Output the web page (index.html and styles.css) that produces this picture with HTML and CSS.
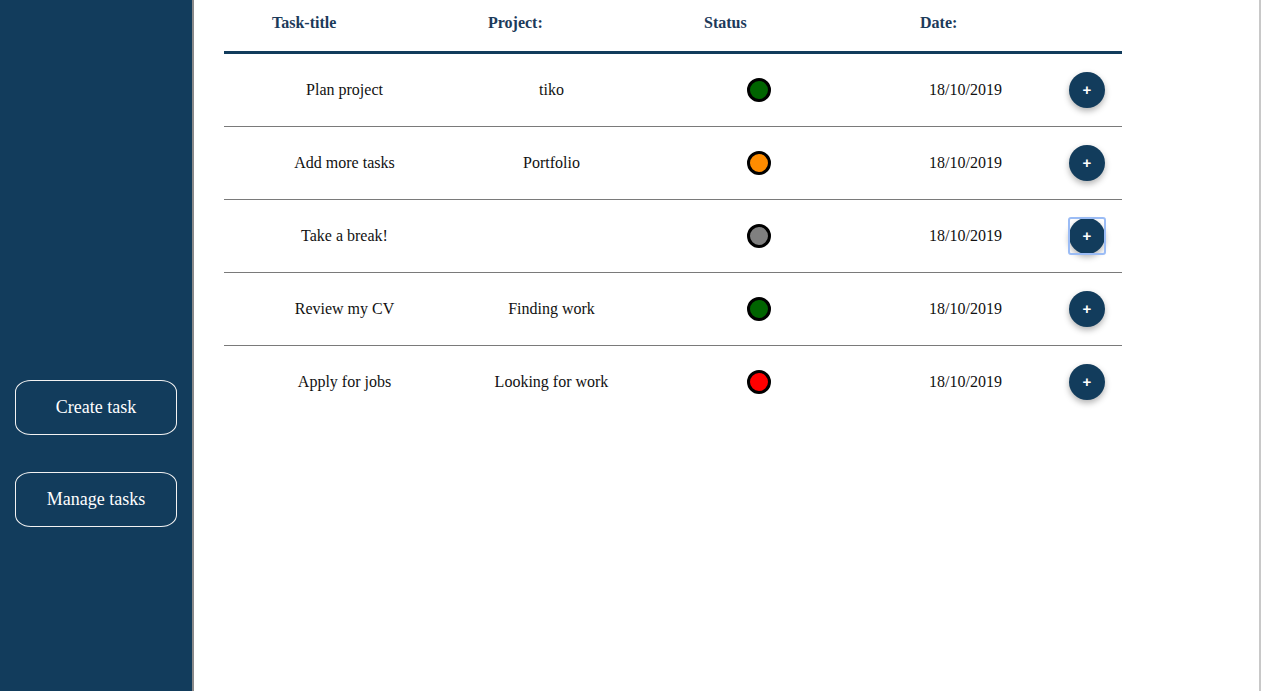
FILE: index.html
```html
<!DOCTYPE html>
<html>
<head>
<meta charset="utf-8">
<link rel="stylesheet" href="styles.css">
</head>
<body>
<div class="app">
  <aside class="sidebar">
    <button class="side-btn">Create task</button>
    <button class="side-btn">Manage tasks</button>
  </aside>
  <main class="main">
    <div class="table">
      <div class="thead">
        <div class="th">Task-title</div>
        <div class="th">Project:</div>
        <div class="th">Status</div>
        <div class="th">Date:</div>
      </div>
      <div class="row">
        <div class="cell">Plan project</div>
        <div class="cell">tiko</div>
        <div class="cell"><span class="dot green"></span></div>
        <div class="cell">18/10/2019</div>
        <div class="cell"><button class="add">+</button></div>
      </div>
      <div class="row">
        <div class="cell">Add more tasks</div>
        <div class="cell">Portfolio</div>
        <div class="cell"><span class="dot orange"></span></div>
        <div class="cell">18/10/2019</div>
        <div class="cell"><button class="add">+</button></div>
      </div>
      <div class="row">
        <div class="cell">Take a break!</div>
        <div class="cell"></div>
        <div class="cell"><span class="dot gray"></span></div>
        <div class="cell">18/10/2019</div>
        <div class="cell"><button class="add focused">+</button></div>
      </div>
      <div class="row">
        <div class="cell">Review my CV</div>
        <div class="cell">Finding work</div>
        <div class="cell"><span class="dot green"></span></div>
        <div class="cell">18/10/2019</div>
        <div class="cell"><button class="add">+</button></div>
      </div>
      <div class="row last">
        <div class="cell">Apply for jobs</div>
        <div class="cell">Looking for work</div>
        <div class="cell"><span class="dot red"></span></div>
        <div class="cell">18/10/2019</div>
        <div class="cell"><button class="add">+</button></div>
      </div>
    </div>
  </main>
</div>
</body>
</html>
```
FILE: styles.css
```css
* { box-sizing: border-box; }
html, body { margin: 0; padding: 0; height: 100%; background: #fff; }
body { font-family: "Liberation Serif", "Times New Roman", serif; }

.app {
  display: flex;
  height: 691px;
  width: 1263px;
  padding-right: 2px;
}

.sidebar {
  width: 194px;
  flex: none;
  background: #123c5c;
  border-right: 2px solid #8a8a8a;
  display: flex;
  flex-direction: column;
  gap: 37px;
  padding: 380px 0 0 15px;
}

.side-btn {
  width: 162px;
  height: 55px;
  background: transparent;
  border: 1px solid #f2f2f2;
  border-radius: 16px / 12px;
  color: #fff;
  font-family: "Liberation Serif", serif;
  font-size: 18px;
  padding: 0;
}

.main {
  flex: 1;
  border-right: 2px solid #c8c8c8;
  padding-left: 30px;
}

.table { width: 898px; }

.thead {
  display: flex;
  height: 54px;
  padding: 14px 0 0 48px;
  border-bottom: 3px solid #123c5c;
}

.th {
  flex: none;
  width: 216px;
  font-weight: bold;
  font-size: 16px;
  line-height: 18px;
  color: #1c3a5a;
}

.row {
  display: grid;
  grid-template-columns: 207px 207px 207px 207px 36px;
  align-items: center;
  height: 73px;
  padding: 0 17px;
  border-bottom: 1px solid #7a7a7a;
  font-size: 16px;
  color: #111;
}
.row.last { border-bottom: none; height: 72px; }

.cell {
  text-align: center;
  display: flex;
  justify-content: center;
  align-items: center;
}

.dot {
  width: 24px;
  height: 24px;
  border-radius: 50%;
  border: 3px solid #000;
  display: block;
}
.dot.green { background: #006400; }
.dot.orange { background: #ff8c00; }
.dot.gray { background: #808080; }
.dot.red { background: #ff0000; }

.add {
  position: relative;
  width: 36px;
  height: 36px;
  border-radius: 50%;
  border: none;
  background: #123c5c;
  color: #fff;
  font-family: "Liberation Sans", Arial, sans-serif;
  font-weight: bold;
  font-size: 15px;
  line-height: 36px;
  padding: 0;
  box-shadow: 0 3px 6px rgba(0,0,0,0.3);
}
.add.focused::after {
  content: "";
  position: absolute;
  left: -1px;
  top: -1px;
  right: -1px;
  bottom: -1px;
  border: 2px solid #9bbcf5;
  border-radius: 3px;
}
```
